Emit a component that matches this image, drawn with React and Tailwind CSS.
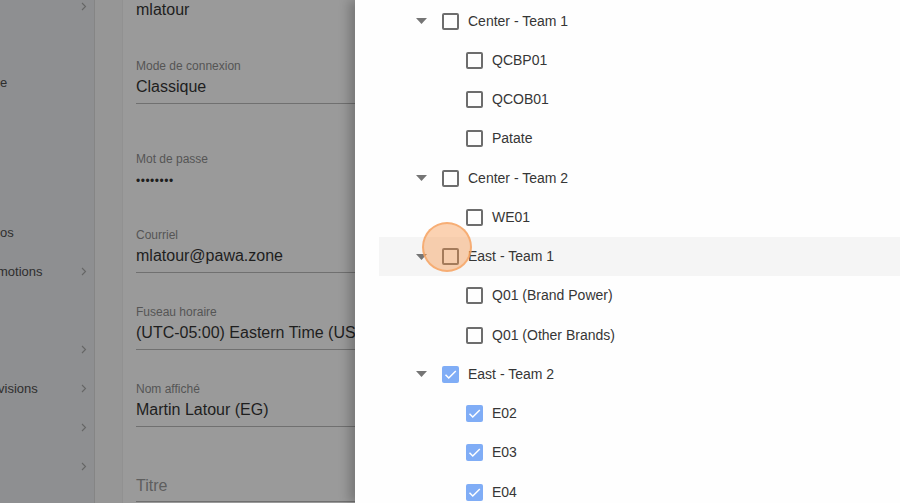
import React from 'react'

const FONT = { fontFamily: '"Liberation Sans", Arial, sans-serif' }

const tree = [
  { label: 'Center - Team 1', parent: true },
  { label: 'QCBP01' },
  { label: 'QCOB01' },
  { label: 'Patate' },
  { label: 'Center - Team 2', parent: true },
  { label: 'WE01' },
  { label: 'East - Team 1', parent: true, hover: true },
  { label: 'Q01 (Brand Power)' },
  { label: 'Q01 (Other Brands)' },
  { label: 'East - Team 2', parent: true, checked: true },
  { label: 'E02', checked: true },
  { label: 'E03', checked: true },
  { label: 'E04', checked: true },
]

function Chevron() {
  return (
    <svg width="6" height="9" viewBox="0 0 6 9" className="shrink-0">
      <path d="M1 1l3.5 3.5L1 8" fill="none" stroke="#666" strokeWidth="1.1" />
    </svg>
  )
}

function Checkbox({ checked }) {
  if (checked) {
    return (
      <div className="w-[17px] h-[17px] rounded-[2px] bg-[#80adf6] flex items-center justify-center shrink-0">
        <svg width="15" height="15" viewBox="0 0 24 24">
          <path d="M4 12.5l5.2 5.2L20.5 6.5" fill="none" stroke="#fff" strokeWidth="2.4" />
        </svg>
      </div>
    )
  }
  return <div className="w-[17px] h-[17px] rounded-[2px] border-2 border-[#6d6d6d] shrink-0" />
}

function Caret() {
  return (
    <svg width="11" height="6" viewBox="0 0 11 6" className="shrink-0">
      <path d="M0 0h11L5.5 6z" fill="#757575" />
    </svg>
  )
}

function Field({ label, value, top }) {
  return (
    <div className={`${top} border-b border-[#707070] pb-[6px]`}>
      <div className="text-[12px] leading-[16px] text-[#555]">{label}</div>
      <div className="mt-[3px] text-[16px] leading-[20px] text-[#1e1e1e] whitespace-nowrap">{value}</div>
    </div>
  )
}

export default function App() {
  return (
    <div className="relative w-[900px] h-[503px] overflow-hidden flex bg-white" style={FONT}>
      {/* dimmed page behind drawer */}
      <div className="w-[355px] h-full flex shrink-0">
        {/* sidebar */}
        <div className="w-[95px] h-full bg-[#8e8f91] border-r border-[#858585] flex flex-col text-[13px] text-[#2e2e2e] overflow-hidden shrink-0">
          <div className="h-[40px] -mt-[14px] flex items-center justify-end pr-[7px] shrink-0"><Chevron /></div>
          <div className="h-[38px] shrink-0" />
          <div className="h-[38px] flex items-center shrink-0">e</div>
          <div className="h-[111px] shrink-0" />
          <div className="h-[39px] flex items-center shrink-0">os</div>
          <div className="h-[39px] flex items-center justify-between pr-[7px] shrink-0"><span className="-ml-[3px]">motions</span><Chevron /></div>
          <div className="h-[39px] shrink-0" />
          <div className="h-[39px] flex items-center justify-end pr-[7px] shrink-0"><Chevron /></div>
          <div className="h-[39px] flex items-center justify-between pr-[7px] shrink-0"><span className="-ml-[2px]">visions</span><Chevron /></div>
          <div className="h-[39px] flex items-center justify-end pr-[7px] shrink-0"><Chevron /></div>
          <div className="h-[39px] flex items-center justify-end pr-[7px] shrink-0"><Chevron /></div>
          <div className="h-[39px] flex items-start pt-[25px] text-[10px] shrink-0">tí</div>
        </div>
        {/* gutter */}
        <div className="w-[28px] h-full bg-[#969696] border-r border-[#919191] shrink-0" />
        {/* form */}
        <div className="flex-1 h-full bg-[#9a9a9a] pl-[13px] overflow-hidden">
          <div className="text-[16px] leading-[20px] text-[#1e1e1e]">mlatour</div>
          <Field top="mt-[38px]" label="Mode de connexion" value="Classique" />
          <div className="mt-[47px]">
            <div className="text-[12px] leading-[16px] text-[#555]">Mot de passe</div>
            <div className="mt-[4px] text-[12px] leading-[20px] text-[#1e1e1e] tracking-[0.5px]">••••••••</div>
          </div>
          <Field top="mt-[36px]" label="Courriel" value="mlatour@pawa.zone" />
          <Field top="mt-[31px]" label="Fuseau horaire" value="(UTC-05:00) Eastern Time (US & Canada)" />
          <Field top="mt-[31px]" label="Nom affiché" value="Martin Latour (EG)" />
          <div className="mt-[49px] border-b border-[#707070] pb-[5px] text-[16px] leading-[20px] text-[#5e5e5e]">Titre</div>
        </div>
      </div>

      {/* drawer */}
      <div className="relative z-10 flex-1 h-full bg-[#fefefe] shadow-[-6px_0_10px_rgba(0,0,0,0.22)] pl-[24px] pt-[1.4px]">
        {tree.map((row, i) => (
          <div
            key={i}
            className={`h-[39.25px] flex items-center text-[14px] text-[#363636] whitespace-nowrap ${row.hover ? 'bg-[#f5f5f5]' : ''} ${row.parent ? 'pl-[37px]' : 'pl-[87px]'}`}
          >
            {row.parent && <Caret />}
            {row.parent && <div className="w-[15px]" />}
            <Checkbox checked={row.checked} />
            <span className="ml-[9px]">{row.label}</span>
          </div>
        ))}
      </div>

      {/* click highlight */}
      <div className="absolute z-20 left-[422px] top-[222px] w-[50px] h-[50px] rounded-full bg-[#f79040]/40 border-2 border-[#f5a565]/80" />
    </div>
  )
}
